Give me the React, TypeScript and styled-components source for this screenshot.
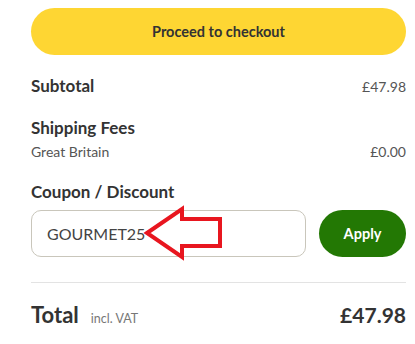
import React from "react";
import styled, { createGlobalStyle } from "styled-components";

const Global = createGlobalStyle`
  html, body { margin: 0; padding: 0; background: #fff; }
  body { font-family: Lato, "Noto Sans", sans-serif; color: #333; }
  * { box-sizing: border-box; }
`;

const Panel = styled.div`
  width: 415px;
  padding: 8px 9px 0 31px;
  display: flex;
  flex-direction: column;
`;

const CheckoutButton = styled.button`
  height: 47px;
  width: 100%;
  border: none;
  border-radius: 24px;
  background: #fed633;
  color: #333;
  font-family: inherit;
  font-weight: 700;
  font-size: 14.5px;
  cursor: pointer;
`;

const Row = styled.div<{ $top?: number }>`
  display: flex;
  justify-content: space-between;
  align-items: baseline;
  line-height: 20px;
  margin-top: ${(p) => p.$top ?? 0}px;
`;

const Label = styled.span`
  font-weight: 700;
  font-size: 17px;
  color: #333;
`;

const Value = styled.span`
  font-size: 14px;
  color: #555;
`;

const SubLabel = styled.span`
  font-size: 14px;
  color: #555;
`;

const CouponRow = styled.div`
  display: flex;
  gap: 13px;
  margin-top: 8px;
  position: relative;
`;

const CouponInput = styled.div`
  flex: 1;
  height: 47px;
  border: 1px solid #c9c6bb;
  border-radius: 10px;
  display: flex;
  align-items: center;
  padding-left: 15px;
  font-size: 16px;
  color: #444;
`;

const ApplyButton = styled.button`
  width: 87px;
  height: 47px;
  border: none;
  border-radius: 24px;
  background: #237804;
  color: #fff;
  font-family: inherit;
  font-weight: 700;
  font-size: 14.5px;
`;

const Arrow = styled.svg`
  position: absolute;
  left: 109px;
  top: -6px;
`;

const Divider = styled.hr`
  border: none;
  border-top: 1px solid #e3e3e3;
  margin: 25px 0 0;
`;

const TotalRow = styled.div`
  display: flex;
  align-items: baseline;
  line-height: 26px;
  margin-top: 19px;
`;

const TotalLabel = styled.span`
  font-weight: 700;
  font-size: 22px;
  color: #333;
`;

const Vat = styled.span`
  font-size: 12.5px;
  color: #777;
  margin-left: 12px;
  flex: 1;
`;

const TotalValue = styled.span`
  font-weight: 700;
  font-size: 21px;
  color: #333;
`;

export default function App() {
  return (
    <>
      <Global />
      <Panel>
        <CheckoutButton>Proceed to checkout</CheckoutButton>
        <Row $top={21}>
          <Label>Subtotal</Label>
          <Value>£47.98</Value>
        </Row>
        <Row $top={21}>
          <Label>Shipping Fees</Label>
        </Row>
        <Row $top={4}>
          <SubLabel>Great Britain</SubLabel>
          <Value>£0.00</Value>
        </Row>
        <Row $top={20}>
          <Label>Coupon / Discount</Label>
        </Row>
        <CouponRow>
          <CouponInput>GOURMET25</CouponInput>
          <ApplyButton>Apply</ApplyButton>
          <Arrow width="85" height="58" viewBox="0 0 85 58">
            <path
              d="M7 29 L42 5 L42 15 L80 15 L80 42 L42 42 L42 53 Z"
              fill="none"
              stroke="#e8161f"
              strokeWidth="4"
              strokeLinejoin="miter"
            />
          </Arrow>
        </CouponRow>
        <Divider />
        <TotalRow>
          <TotalLabel>Total</TotalLabel>
          <Vat>incl. VAT</Vat>
          <TotalValue>£47.98</TotalValue>
        </TotalRow>
      </Panel>
    </>
  );
}
